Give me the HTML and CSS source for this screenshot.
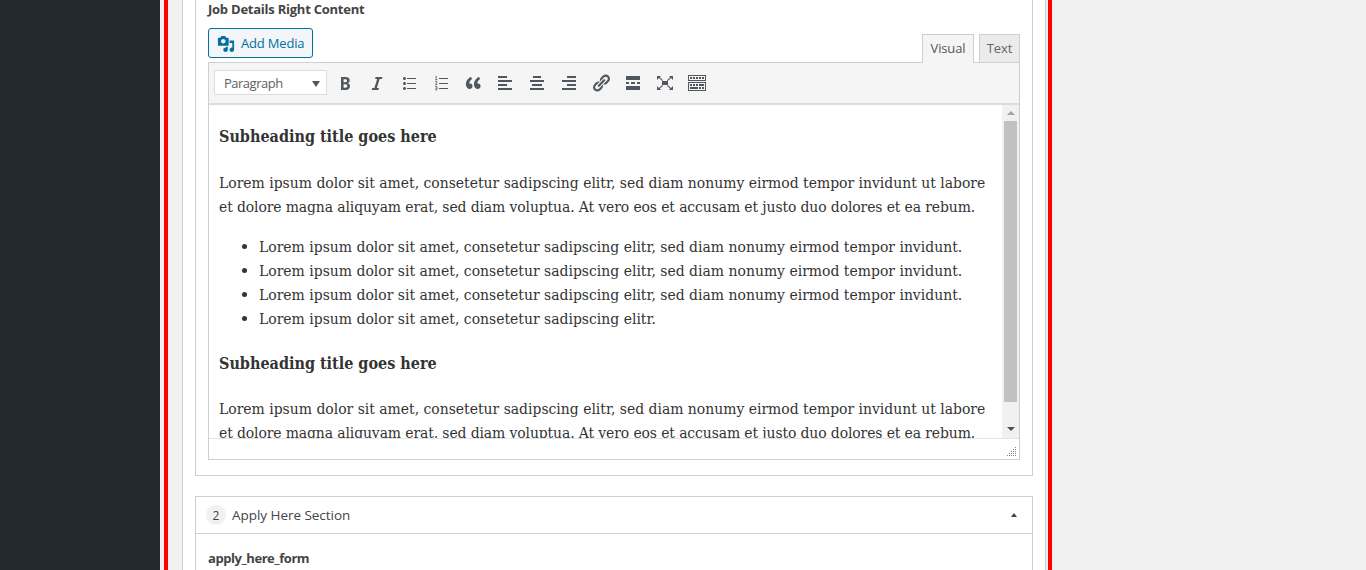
FILE: index.html
```html
<!DOCTYPE html>
<html lang="en">
<head>
<meta charset="utf-8">
<title>Job Details</title>
<link rel="stylesheet" href="styles.css">
</head>
<body>
<aside class="sidebar"></aside>
<main class="outline">
<div class="panel">
<section class="box editor-box">
<div class="field-label"><span>Job Details Right Content</span></div>
<div class="editor-tools">
<button class="add-media"><svg class="media-icon" viewBox="0 0 20 20"><path d="M13 11V4c0-.55-.45-1-1-1h-1.67L9 1H5L3.67 3H2c-.55 0-1 .45-1 1v7c0 .55.45 1 1 1h10c.55 0 1-.45 1-1zM7 4.5c1.38 0 2.5 1.12 2.5 2.5S8.38 9.5 7 9.5 4.5 8.38 4.5 7 5.62 4.5 7 4.5zM14 6h5v10.5c0 1.38-1.12 2.5-2.5 2.5S14 17.88 14 16.5s1.12-2.5 2.5-2.5c.17 0 .34.02.5.05V9h-3V6zm-4 8.05V13h2v3.5c0 1.38-1.12 2.5-2.5 2.5S7 17.88 7 16.5 8.12 14 9.5 14c.17 0 .34.02.5.05z"/></svg><span>Add Media</span></button>
<div class="tabs"><button class="tab active">Visual</button><button class="tab">Text</button></div>
</div>
<div class="editor">
<div class="toolbar">
<div class="format"><span>Paragraph</span><i></i></div>
<svg viewBox="0 0 20 20"><path d="M6 4v13h4.54c1.37 0 2.46-.33 3.26-1 .8-.66 1.2-1.58 1.2-2.77 0-.84-.17-1.51-.51-2.01s-.9-.85-1.67-1.03v-.09c.57-.1 1.02-.4 1.36-.9s.51-1.13.51-1.91c0-1.14-.39-1.98-1.17-2.5C12.75 4.26 11.5 4 9.78 4H6zm2.57 5.15V6.26h1.36c.73 0 1.27.11 1.61.32.34.22.51.58.51 1.07 0 .54-.16.92-.47 1.15s-.82.35-1.51.35h-1.5zm0 2.19h1.6c1.44 0 2.16.53 2.16 1.61 0 .6-.17 1.05-.51 1.34s-.86.43-1.57.43H8.57v-3.38z"/></svg>
<svg viewBox="0 0 20 20"><path d="M14.78 6h-2.13l-2.8 9h2.12l-.62 2H4.6l.62-2h2.14l2.8-9H8.03l.62-2h6.75z"/></svg>
<svg viewBox="0 0 20 20"><path d="M5.5 7C4.67 7 4 6.33 4 5.5 4 4.68 4.67 4 5.5 4 6.32 4 7 4.68 7 5.5 7 6.33 6.32 7 5.5 7zM8 5h9v1H8V5zm-2.5 7c-.83 0-1.5-.67-1.5-1.5C4 9.68 4.67 9 5.5 9c.82 0 1.5.68 1.5 1.5 0 .83-.68 1.5-1.5 1.5zM8 10h9v1H8v-1zm-2.5 7c-.83 0-1.5-.67-1.5-1.5 0-.82.67-1.5 1.5-1.5.82 0 1.5.68 1.5 1.5 0 .83-.68 1.5-1.5 1.5zM8 15h9v1H8v-1z"/></svg>
<svg viewBox="0 0 20 20"><path d="M8 5h9v1H8zM8 10h9v1H8zM8 15h9v1H8z"/><path class="digits" d="M4.300 3.900l1-.6v3.500M4.200 6.700h2.200M4 8.600h2v1.200L4.200 11.600h2.200M4 13.500h2v3.400H4M4.400 15.200H6"/></svg>
<svg viewBox="0 0 20 20"><path d="M9.49 13.22c0-.74-.2-1.38-.61-1.9-.62-.78-1.83-.88-2.53-.72-.29-1.65 1.11-3.75 2.92-4.65L7.88 4c-2.73 1.3-5.42 4.28-4.96 8.05C3.21 14.43 4.59 16 6.54 16c.85 0 1.56-.25 2.12-.75s.83-1.18.83-2.03zm8.05 0c0-.74-.2-1.38-.61-1.9-.63-.78-1.83-.88-2.53-.72-.29-1.65 1.11-3.75 2.92-4.65L15.93 4c-2.73 1.3-5.41 4.28-4.95 8.05.29 2.38 1.66 3.95 3.61 3.95.85 0 1.56-.25 2.12-.75s.83-1.18.83-2.03z"/></svg>
<svg viewBox="0 0 20 20"><path d="M12 5V3H3v2h9zm5 4V7H3v2h14zm-5 4v-2H3v2h9zm5 4v-2H3v2h14z"/></svg>
<svg viewBox="0 0 20 20"><path d="M14 5V3H6v2h8zm3 4V7H3v2h14zm-2 4v-2H5v2h10zm2 4v-2H3v2h14z"/></svg>
<svg viewBox="0 0 20 20"><path d="M17 5V3H8v2h9zm0 4V7H3v2h14zm0 4v-2H8v2h9zm0 4v-2H3v2h14z"/></svg>
<svg viewBox="0 0 20 20"><path d="M17.74 2.76c1.68 1.69 1.68 4.41 0 6.1l-1.53 1.52c-1.12 1.12-2.7 1.47-4.14 1.09l2.62-2.61.76-.77.76-.76c.84-.84.84-2.2 0-3.04-.84-.85-2.2-.85-3.04 0l-.77.76-3.38 3.38c-.37-1.44-.02-3.02 1.1-4.14l1.52-1.53c1.69-1.68 4.42-1.68 6.1 0zM8.59 13.43l5.34-5.34c.42-.42.42-1.1 0-1.52-.44-.43-1.13-.39-1.53 0l-5.33 5.34c-.42.42-.42 1.1 0 1.52.44.43 1.13.39 1.52 0zm-.76 2.29l4.14-4.15c.38 1.44.03 3.02-1.09 4.14l-1.52 1.53c-1.69 1.68-4.41 1.68-6.1 0-1.68-1.68-1.68-4.42 0-6.1l1.53-1.52c1.12-1.12 2.7-1.47 4.14-1.1l-4.14 4.15c-.85.84-.85 2.2 0 3.05.84.84 2.2.84 3.04 0z"/></svg>
<svg viewBox="0 0 20 20"><path d="M17 7V3H3v4h14zM6 11V9H3v2h3zm6 0V9H8v2h4zm5 0V9h-3v2h3zm0 6v-4H3v4h14z"/></svg>
<svg viewBox="0 0 20 20"><path d="M7 8h6v4H7zM2 3h4L4.800 4.200 8 7.200l-.8.8L4 4.900 2 7zM18 3h-4l1.200 1.200L12 7.200l.8.8L16 4.900 18 7zM2 17h4l-1.200-1.200 3.200-3-.8-.8L4 15.100 2 13zM18 17h-4l1.200-1.200-3.200-3 .8-.8L16 15.100 18 13z"/></svg>
<svg viewBox="0 0 20 20"><path d="M19 2v6H1V2h18zm-1 5V3H2v4h16zM5 4v2H3V4h2zm3 0v2H6V4h2zm3 0v2H9V4h2zm3 0v2h-2V4h2zm3 0v2h-2V4h2zm2 5v9H1V9h18zm-1 8v-7H2v7h16zM5 11v2H3v-2h2zm3 0v2H6v-2h2zm3 0v2H9v-2h2zm6 0v2h-5v-2h5zm-6 3v2H3v-2h8zm3 0v2h-2v-2h2zm3 0v2h-2v-2h2z"/></svg>
</div>
<div class="viewport">
<article class="content">
<h4>Subheading title goes here</h4>
<p><span class="l1">Lorem ipsum dolor sit amet, consetetur sadipscing elitr, sed diam nonumy eirmod tempor invidunt ut labore</span><br><span class="l2">et dolore magna aliquyam erat, sed diam voluptua. At vero eos et accusam et justo duo dolores et ea rebum.</span></p>
<ul>
<li>Lorem ipsum dolor sit amet, consetetur sadipscing elitr, sed diam nonumy eirmod tempor invidunt.</li>
<li>Lorem ipsum dolor sit amet, consetetur sadipscing elitr, sed diam nonumy eirmod tempor invidunt.</li>
<li>Lorem ipsum dolor sit amet, consetetur sadipscing elitr, sed diam nonumy eirmod tempor invidunt.</li>
<li>Lorem ipsum dolor sit amet, consetetur sadipscing elitr.</li>
</ul>
<h4 class="tight">Subheading title goes here</h4>
<p><span class="l1">Lorem ipsum dolor sit amet, consetetur sadipscing elitr, sed diam nonumy eirmod tempor invidunt ut labore</span><br><span class="l2">et dolore magna aliquyam erat, sed diam voluptua. At vero eos et accusam et justo duo dolores et ea rebum.</span></p>
</article>
<div class="scrollbar"><i class="up"></i><b></b><i class="down"></i></div>
</div>
<div class="statusbar"><svg viewBox="0 0 10 10"><path d="M8 0h1v1H8zM6 2h1v1H6zM8 2h1v1H8zM4 4h1v1H4zM6 4h1v1H6zM8 4h1v1H8zM2 6h1v1H2zM4 6h1v1H4zM6 6h1v1H6zM8 6h1v1H8zM0 8h1v1H0zM2 8h1v1H2zM4 8h1v1H4zM6 8h1v1H6zM8 8h1v1H8z"/></svg></div>
</div>
</section>
<section class="box">
<header class="row-head"><span class="num">2</span><span class="title">Apply Here Section</span><i></i></header>
<div class="form-label"><span>apply_here_form</span></div>
</section>
</div>
</main>
</body>
</html>
```
FILE: styles.css
```css
* { box-sizing: border-box; }
body {
  margin: 0;
  height: 570px;
  overflow: hidden;
  display: flex;
  background: #f1f1f1;
  font: 13px/18px "Open Sans", "Noto Sans", sans-serif;
  color: #444;
}
button { font: inherit; margin: 0; }
.sidebar { width: 160px; background: #23282d; }
.outline {
  width: 888px;
  margin-left: 4px;
  padding: 0 2px 0 14px;
  border: solid #f00;
  border-width: 0 4px;
}
.panel {
  height: 570px;
  padding: 0 12px;
  background: #fff;
  border: solid #ccd0d4;
  border-width: 0 1px;
}
.box { border: 1px solid #ccd0d4; height: 90px; }
.editor-box { height: 476px; margin-bottom: 20px; padding: 0 12px; border-top: 0; }
.field-label { height: 28px; font-weight: 700; letter-spacing: -.24px; }
.editor-tools { height: 34px; display: flex; justify-content: space-between; }
.add-media {
  width: 105px;
  height: 30px;
  display: flex;
  align-items: center;
  padding: 0 0 0 8px;
  color: #0071a1;
  background: #f3f5f6;
  border: 1px solid #0071a1;
  border-radius: 3px;
  white-space: nowrap;
  letter-spacing: -.18px;
}
.media-icon { width: 18px; height: 18px; margin: 2px 6px 0 0; fill: #0071a1; }
.tabs { display: flex; gap: 5px; padding-top: 6px; }
.tab {
  height: 28px;
  width: 41px;
  padding: 0 0 1px;
  border: 1px solid #ccd0d4;
  border-bottom: 0;
  background: #ebebeb;
  color: #666;
  letter-spacing: -.15px;
}
.tab.active { width: 52px; height: 29px; padding-bottom: 2px; background: #f5f5f5; color: #555; position: relative; z-index: 1; }
.editor { height: 398px; border: 1px solid #ccd0d4; }
.toolbar {
  height: 42px;
  display: flex;
  align-items: center;
  gap: 12px;
  padding-left: 5px;
  background: #f5f5f5;
  border-bottom: 2px solid #ddd;
}
.toolbar svg { width: 20px; height: 20px; flex: none; fill: #50575e; }
.toolbar .digits { fill: none; stroke: #50575e; stroke-width: .75; }
.format {
  width: 113px;
  height: 25px;
  margin: 0 -4px 1px 0;
  padding: 0 6px 0 9px;
  display: flex;
  align-items: center;
  justify-content: space-between;
  background: #fff;
  border: 1px solid #ddd;
  color: #606060;
  letter-spacing: -.5px;
}
.format span { padding-top: 1px; }
.format i { border: 4px solid transparent; border-top: 6px solid #50575e; border-bottom: 0; margin-top: 2px; }
.viewport { height: 333px; display: flex; overflow: hidden; }
.content {
  flex: 1;
  width: 0;
  padding: 20px 0 0 10px;
  color: #333;
  font: 15.5px/24px "DejaVu Serif Condensed", "Liberation Serif", serif;
  white-space: nowrap;
}
.content h4 { margin: 0 0 22px; font-size: 16px; }
.content .tight { margin-bottom: 21px; }
.content p { margin: 0 0 16px; }
.content ul { margin: 0 0 21px; padding-left: 40px; }
.content li { letter-spacing: .01px; }
.content li::marker { font-family: "Liberation Serif", serif; font-size: 17px; }
.content .l2 { letter-spacing: -.106px; }
.scrollbar {
  width: 17px;
  display: flex;
  flex-direction: column;
  align-items: center;
  background: #f1f1f1;
}
.scrollbar b { width: 13px; height: 281px; margin: 6px 0 25px; background: #c1c1c1; }
.scrollbar i { border: 4px solid transparent; }
.scrollbar .up { margin-top: 6px; border-top: 0; border-bottom-color: #a3a3a3; }
.scrollbar .down { border-bottom: 0; border-top-color: #505050; }
.statusbar {
  height: 21px;
  display: flex;
  justify-content: flex-end;
  align-items: flex-end;
  padding: 0 2px 2px;
  border-top: 1px solid #e5e5e5;
}
.statusbar svg { width: 10px; height: 10px; fill: #888; }
.row-head {
  height: 37px;
  display: flex;
  align-items: center;
  padding: 0 15px 0 10px;
  border-bottom: 1px solid #ccd0d4;
}
.num {
  width: 20px;
  height: 20px;
  border-radius: 50%;
  background: #f1f1f1;
  text-align: center;
  line-height: 21px;
  font-size: 12px;
}
.title { margin-left: 6px; font-size: 13.5px; letter-spacing: -.04px; }
.row-head i { margin-left: auto; border: 3px solid transparent; border-top: 0; border-bottom: 4px solid #444; }
.form-label { padding: 15px 12px; font-weight: 700; letter-spacing: -.45px; }
```
